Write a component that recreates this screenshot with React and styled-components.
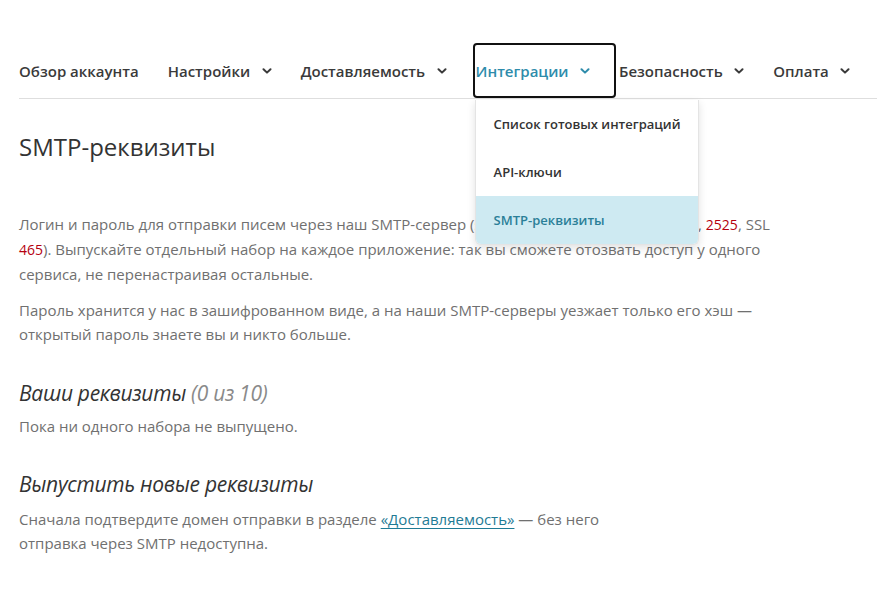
import React from "react";
import styled, { createGlobalStyle } from "styled-components";

const GlobalStyle = createGlobalStyle`
  html, body { margin: 0; padding: 0; background: #fff; }
  body {
    font-family: "Open Sans", "Noto Sans", "Liberation Sans", sans-serif;
    color: #333;
    -webkit-font-smoothing: antialiased;
  }
  * { box-sizing: border-box; }
`;

const Page = styled.div`
  padding: 43px 0 40px 19px;
`;

const NavBar = styled.nav`
  border-bottom: 1px solid #dedede;
  height: 56px;
`;

const NavList = styled.div`
  display: flex;
  align-items: stretch;
  height: 100%;
  margin-left: -3px;
`;

const NavItem = styled.div`
  position: relative;
  display: flex;
  align-items: center;
  gap: 11.5px;
  padding: 1px 26px 0 3px;
  font-size: 15px;
  font-weight: 600;
  color: ${(p) => (p.$active ? "#2e8cab" : "#3a3a3a")};
  cursor: pointer;
  border-radius: 4px;
  outline: ${(p) => (p.$focused ? "2px solid #111" : "none")};
  outline-offset: -2px;
  white-space: nowrap;
`;

const Chevron = styled.svg`
  width: 10px;
  height: 6px;
  flex: none;
`;

const Menu = styled.div`
  position: absolute;
  top: calc(100% + 2px);
  left: 2px;
  width: 224px;
  background: #fff;
  border: 1px solid #e4e4e4;
  border-top: none;
  border-radius: 0 0 6px 6px;
  box-shadow: 0 3px 8px rgba(0, 0, 0, 0.12);
  overflow: hidden;
  z-index: 5;
`;

const MenuItem = styled.div`
  height: 48px;
  display: flex;
  align-items: center;
  padding: 0 18px 1px;
  font-size: 13px;
  font-weight: 600;
  color: ${(p) => (p.$selected ? "#2a7f98" : "#333")};
  background: ${(p) => (p.$selected ? "#ceeaf2" : "#fff")};
`;

const Content = styled.main`
  max-width: 760px;
`;

const Title = styled.h1`
  margin: 32px 0 0;
  font-size: 24px;
  line-height: 32px;
  font-weight: 400;
  color: #333;
`;

const Text = styled.p`
  margin: ${(p) => p.$mt || "12px"} 0 0;
  font-size: 15px;
  line-height: 24px;
  color: #707070;
  max-width: ${(p) => (p.$narrow ? "600px" : "none")};
`;

const Code = styled.code`
  font-family: "Open Sans", "Noto Sans", sans-serif;
  font-size: 14px;
  color: #b5000f;
`;

const Subtitle = styled.h2`
  margin: ${(p) => p.$mt || "32px"} 0 0;
  font-size: 21px;
  line-height: 28px;
  font-weight: 400;
  font-style: italic;
  color: #333;
  letter-spacing: -0.3px;
`;

const Muted = styled.span`
  color: #8a8a8a;
`;

const Link = styled.a`
  color: #1f7b95;
  text-decoration: underline;
  text-decoration-color: #1f7b95;
  text-underline-offset: 3px;
`;

const ChevronIcon = () => (
  <Chevron viewBox="0 0 10 6" aria-hidden="true">
    <polyline
      points="1.5,1.2 5,4.6 8.5,1.2"
      fill="none"
      stroke="currentColor"
      strokeWidth="2"
      strokeLinecap="round"
      strokeLinejoin="round"
    />
  </Chevron>
);

const navItems = [
  { label: "Обзор аккаунта", menu: false },
  { label: "Настройки", menu: true },
  { label: "Доставляемость", menu: true },
  { label: "Интеграции", menu: true, active: true },
  { label: "Безопасность", menu: true },
  { label: "Оплата", menu: true },
];

const integrationLinks = ["Список готовых интеграций", "API-ключи", "SMTP-реквизиты"];

export default function App() {
  return (
    <Page>
      <GlobalStyle />
      <NavBar>
        <NavList>
          {navItems.map((item) => (
            <NavItem key={item.label} $active={item.active} $focused={item.active}>
              {item.label}
              {item.menu && <ChevronIcon />}
              {item.active && (
                <Menu>
                  {integrationLinks.map((l) => (
                    <MenuItem key={l} $selected={l === "SMTP-реквизиты"}>
                      {l}
                    </MenuItem>
                  ))}
                </Menu>
              )}
            </NavItem>
          ))}
        </NavList>
      </NavBar>

      <Content>
        <Title>SMTP-реквизиты</Title>
        <Text $mt="49px">
          Логин и пароль для отправки писем через наш SMTP-сервер (
          <Code>smtp.sendbox.net</Code>, порты <Code>25</Code>, <Code>587</Code>,{" "}
          <Code>2525</Code>, SSL <Code>465</Code>). Выпускайте отдельный набор на
          каждое приложение: так вы сможете отозвать доступ у одного сервиса, не
          перенастраивая остальные.
        </Text>
        <Text>
          Пароль хранится у нас в зашифрованном виде, а на наши SMTP-серверы уезжает
          только его хэш — открытый пароль знаете вы и никто больше.
        </Text>

        <Subtitle $mt="33px">
          Ваши реквизиты <Muted>(0 из 10)</Muted>
        </Subtitle>
        <Text $mt="7px">Пока ни одного набора не выпущено.</Text>

        <Subtitle>Выпустить новые реквизиты</Subtitle>
        <Text $mt="9px" $narrow>
          Сначала подтвердите домен отправки в разделе{" "}
          <Link href="#">«Доставляемость»</Link> — без него отправка через SMTP
          недоступна.
        </Text>
      </Content>
    </Page>
  );
}
